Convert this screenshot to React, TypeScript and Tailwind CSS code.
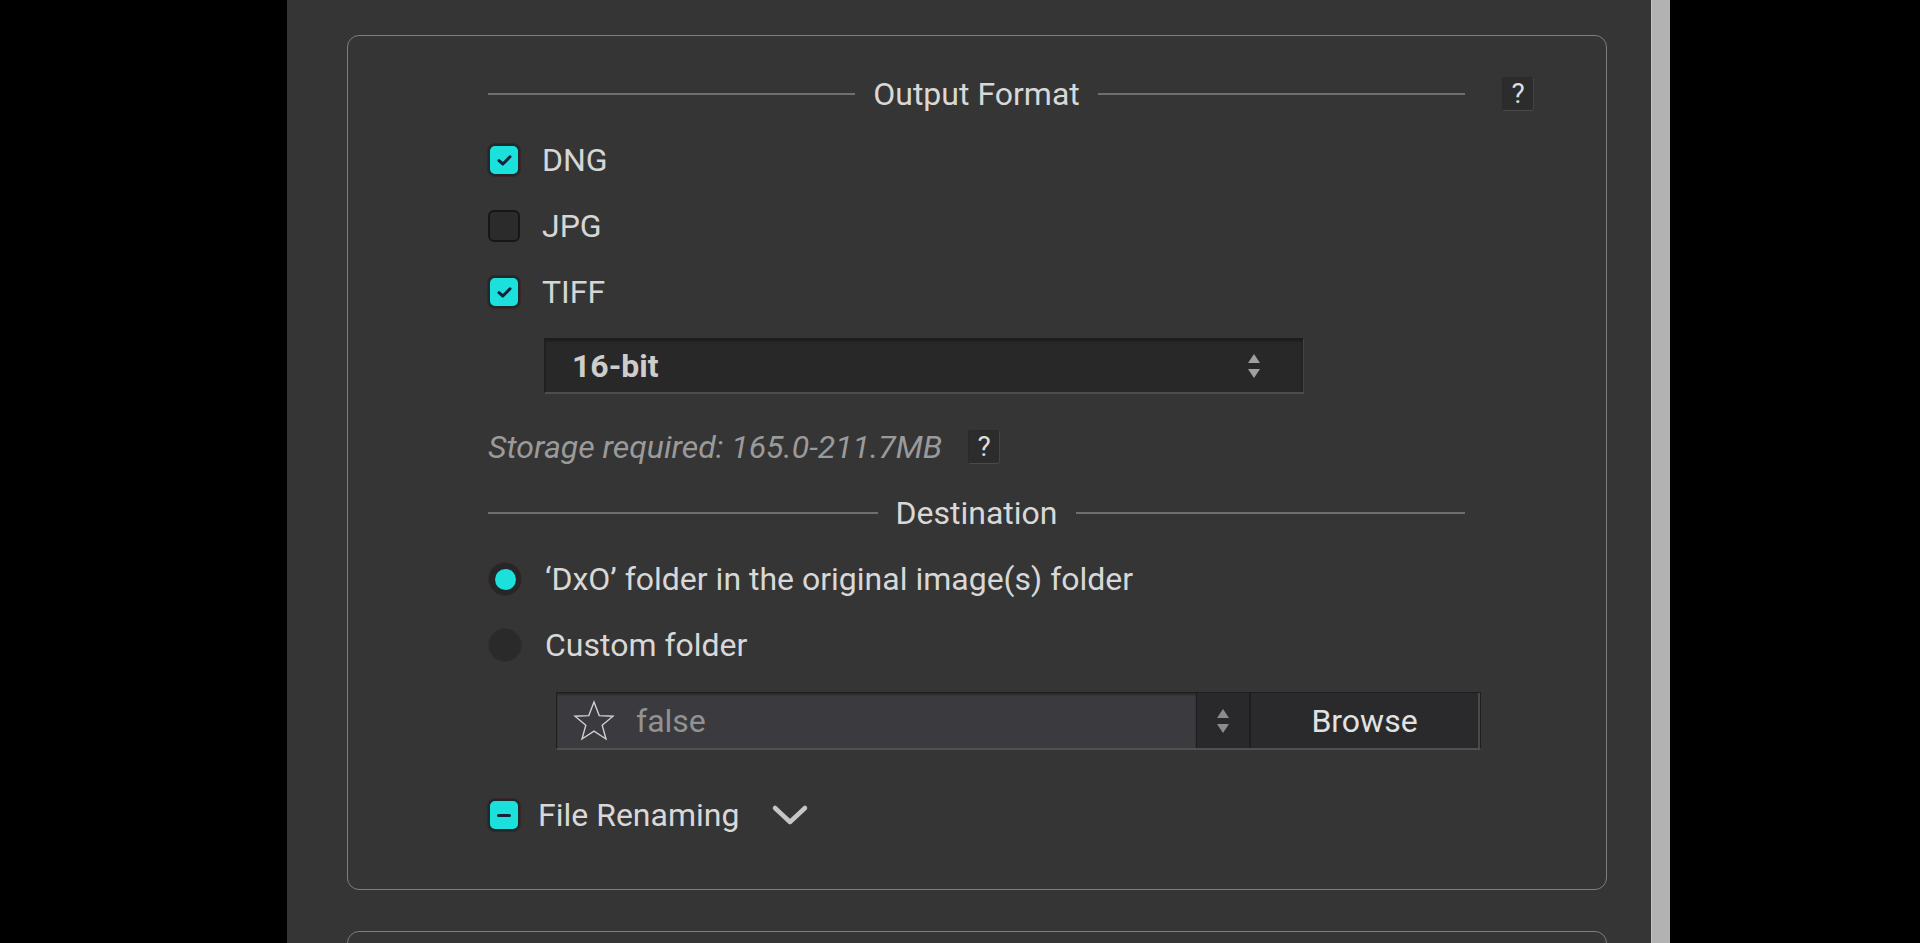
import React from "react";

const font = { fontFamily: "Roboto, 'Noto Sans', sans-serif" };

function Check() {
  return (
    <svg width="17" height="13" viewBox="0 0 17 13">
      <path d="M3 6.6 L6.9 10 L14 2.8" fill="none" stroke="#15203a" strokeWidth="3" strokeLinecap="round" strokeLinejoin="round" />
    </svg>
  );
}

function CheckBox({ state }: { state: "on" | "off" | "mixed" }) {
  if (state === "off") {
    return <div className="w-[32px] h-[32px] rounded-[6px] bg-[#2b2b2b] border-2 border-[#161616] shrink-0" />;
  }
  return (
    <div className="w-[32px] h-[32px] rounded-[7px] bg-[#1ce0dc] border-2 border-[#1d2a2a] shadow-[0_0_0_1px_#3a2626] flex items-center justify-center shrink-0">
      {state === "on" ? <Check /> : <div className="w-[14px] h-[3px] bg-[#15203a] rounded-sm" />}
    </div>
  );
}

function Help() {
  return (
    <div className="w-[32px] h-[34px] rounded-[3px] bg-[#2c2c2c] border border-[#2a2a2a] border-b-[#4a4a4a] border-r-[#444] flex items-center justify-center text-[28px] leading-none text-[#dedede]">
      ?
    </div>
  );
}

function SectionHeader({ title }: { title: string }) {
  return (
    <div className="w-[977px] flex items-center">
      <div className="flex-1 h-[2px] bg-[#6f6f6f]" />
      <div className="px-[18px] text-[32px] text-[#d8d8d8] leading-none">{title}</div>
      <div className="flex-1 h-[2px] bg-[#6f6f6f]" />
    </div>
  );
}

function UpDown({ color = "#a0a0a0" }: { color?: string }) {
  return (
    <svg width="14" height="28" viewBox="0 0 14 28">
      <path d="M7 2 L13 11 L1 11 Z" fill={color} />
      <path d="M1 17 L13 17 L7 26 Z" fill={color} />
    </svg>
  );
}

function Star() {
  return (
    <svg width="44" height="44" viewBox="0 0 44 44">
      <path
        d="M22 3 L27.2 16.6 L41 17.2 L30.2 26.2 L34 40 L22 32.2 L10 40 L13.8 26.2 L3 17.2 L16.8 16.6 Z"
        fill="none"
        stroke="#cfcfcf"
        strokeWidth="1.4"
        strokeLinejoin="miter"
      />
    </svg>
  );
}

export default function App() {
  return (
    <div className="w-[1920px] h-[943px] bg-black flex overflow-hidden" style={font}>
      <div className="w-[287px] shrink-0 bg-black" />
      <div className="w-[1364px] shrink-0 bg-[#353535] pl-[60px] pt-[35px] flex flex-col gap-[41px]">
        <div className="w-[1260px] h-[855px] shrink-0 rounded-[12px] border border-[#7e7e7e] bg-[#353535] pl-[140px] pt-[25px] flex flex-col">
          {/* Output Format header */}
          <div className="h-[66px] flex items-center">
            <SectionHeader title="Output Format" />
            <div className="ml-[37px]">
              <Help />
            </div>
          </div>
          {/* checkbox rows */}
          {[
            { label: "DNG", s: "on" as const },
            { label: "JPG", s: "off" as const },
            { label: "TIFF", s: "on" as const },
          ].map((r) => (
            <div key={r.label} className="h-[66px] flex items-center gap-[22px]">
              <CheckBox state={r.s} />
              <span className="text-[32px] text-[#d6d6d6] leading-none">{r.label}</span>
            </div>
          ))}
          {/* select */}
          <div className="mt-[13px] ml-[56px] w-[760px] h-[56px] bg-[#282828] border border-[#1e1e1e] border-b-2 border-b-[#4d4d4d] border-r-[#444] flex items-center pl-[27px] pr-[42px] shadow-[inset_0_2px_3px_rgba(0,0,0,0.35)]">
            <span className="flex-1 text-[32px] font-bold text-[#cdcdcd] leading-none">16-bit</span>
            <UpDown />
          </div>
          {/* storage */}
          <div className="mt-[20px] h-[66px] flex items-center">
            <span className="text-[32px] italic text-[#9a9a9a] leading-none">Storage required: 165.0-211.7MB</span>
            <div className="ml-[26px]">
              <Help />
            </div>
          </div>
          {/* destination */}
          <div className="h-[66px] flex items-center">
            <SectionHeader title="Destination" />
          </div>
          <div className="h-[66px] flex items-center gap-[23px]">
            <div className="w-[34px] h-[34px] rounded-full bg-[#262626] border border-[#3a2a2a] flex items-center justify-center shrink-0">
              <div className="w-[21px] h-[21px] rounded-full bg-[#1ce0dc]" />
            </div>
            <span className="text-[32px] text-[#d8d8d8] leading-none">‘DxO’ folder in the original image(s) folder</span>
          </div>
          <div className="h-[66px] flex items-center gap-[23px]">
            <div className="w-[34px] h-[34px] rounded-full bg-[#2a2a2a] border border-[#303030] shrink-0" />
            <span className="text-[32px] text-[#d8d8d8] leading-none">Custom folder</span>
          </div>
          {/* folder input */}
          <div className="mt-[14px] ml-[68px] w-[925px] h-[58px] flex border border-[#1e1e1e] border-b-2 border-b-[#505050]">
            <div className="flex-1 bg-[#3b3a3f] flex items-center pl-[15px] gap-[20px] shadow-[inset_0_2px_2px_rgba(0,0,0,0.3)]">
              <Star />
              <span className="text-[32px] text-[#929292] leading-none">false</span>
            </div>
            <div className="w-[55px] bg-[#29292c] border-l border-[#1c1c1c] border-r-2 border-r-[#1f1f1f] flex items-center justify-center">
              <UpDown color="#8c8c8c" />
            </div>
            <div className="w-[229px] bg-[#2a2a2d] border-r-2 border-r-[#4a4a4a] flex items-center justify-center">
              <span className="text-[32px] text-[#e2e2e2] leading-none">Browse</span>
            </div>
          </div>
          {/* file renaming */}
          <div className="mt-[32px] h-[66px] flex items-center">
            <CheckBox state="mixed" />
            <span className="ml-[18px] text-[32px] text-[#d8d8d8] leading-none">File Renaming</span>
            <svg className="ml-[32px]" width="38" height="24" viewBox="0 0 38 24">
              <path d="M4 5 L19 19 L34 5" fill="none" stroke="#c6c6c6" strokeWidth="4.5" strokeLinecap="round" strokeLinejoin="round" />
            </svg>
          </div>
        </div>
        <div className="w-[1260px] h-[200px] shrink-0 rounded-[12px] border border-[#7e7e7e] bg-[#353535]" />
      </div>
      <div className="w-[19px] shrink-0 bg-[#b2b2b2] border-l border-[#c4c4c4]" />
      <div className="flex-1 bg-black" />
    </div>
  );
}
